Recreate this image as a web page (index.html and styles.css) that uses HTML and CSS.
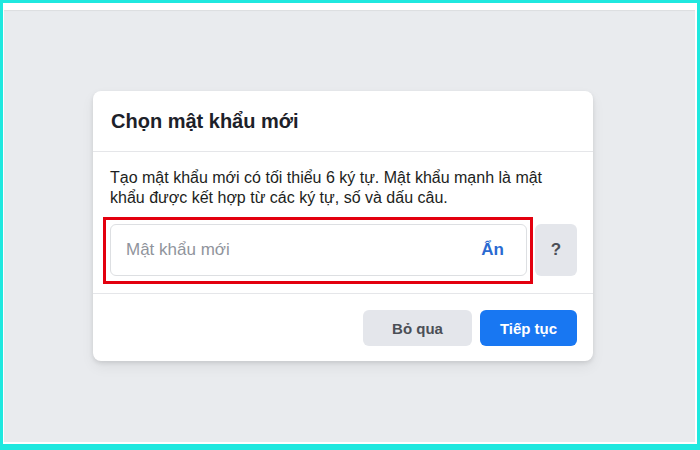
FILE: index.html
```html
<!DOCTYPE html>
<html lang="vi">
<head>
<meta charset="utf-8">
<title>Chọn mật khẩu mới</title>
<link rel="stylesheet" href="styles.css">
</head>
<body>
<div class="frame">
  <div class="stage">
    <div class="card">
      <div class="card-header">
        <h2 class="title">Chọn mật khẩu mới</h2>
      </div>
      <div class="card-body">
        <p class="desc">Tạo mật khẩu mới có tối thiểu 6 ký tự. Mật khẩu mạnh là mật khẩu được kết hợp từ các ký tự, số và dấu câu.</p>
        <div class="field-row">
          <div class="field">
            <span class="placeholder">Mật khẩu mới</span>
            <span class="toggle">Ẩn</span>
            <div class="highlight"></div>
          </div>
          <div class="help">?</div>
        </div>
      </div>
      <div class="card-footer">
        <div class="btn btn-gray">Bỏ qua</div>
        <div class="btn btn-blue">Tiếp tục</div>
      </div>
    </div>
  </div>
</div>
</body>
</html>
```
FILE: styles.css
```css
* { box-sizing: border-box; }
html, body { margin: 0; padding: 0; }
body {
  width: 700px;
  height: 450px;
  overflow: hidden;
  font-family: "Liberation Sans", Arial, sans-serif;
  color: #1c1e21;
}
.frame {
  width: 700px;
  height: 450px;
  border: 3px solid #1fe8df;
  border-bottom-width: 6px;
  background: #ffffff;
  padding: 7px 2px 2px 1px;
}
.stage {
  height: 100%;
  background: #e9ebee;
  box-shadow: inset 0 1px 1px rgba(0,0,0,0.06);
  padding: 81px 0 0 89px;
}
.card {
  width: 500px;
  background: #ffffff;
  border-radius: 8px;
  box-shadow: 0 2px 4px rgba(0,0,0,0.1), 0 6px 14px rgba(0,0,0,0.06);
}
.card-header {
  height: 61px;
  display: flex;
  align-items: center;
  padding: 0 17px 0 18px;
  border-bottom: 1px solid #e5e6e9;
}
.title {
  margin: 0;
  font-size: 20px;
  font-weight: bold;
  color: #1d2129;
}
.card-body {
  padding: 16px 16px 17px 17px;
  border-bottom: 1px solid #e5e6e9;
}
.desc {
  margin: 0 0 16px;
  font-size: 16px;
  line-height: 20px;
  color: #1c1e21;
}
.field-row {
  display: flex;
  gap: 8px;
  height: 52px;
}
.field {
  position: relative;
  flex: 1;
  border: 1px solid #dddfe2;
  border-radius: 6px;
  display: flex;
  align-items: center;
  justify-content: space-between;
  padding: 0 22px 0 15px;
}
.placeholder {
  font-size: 17px;
  color: #90949c;
}
.toggle {
  font-size: 17px;
  font-weight: bold;
  color: #2a6ad1;
}
.highlight {
  position: absolute;
  left: -8px;
  top: -8px;
  right: -7px;
  bottom: -9px;
  border: 3px solid #e3000f;
  pointer-events: none;
}
.help {
  width: 42px;
  background: #e4e6eb;
  border-radius: 6px;
  display: flex;
  align-items: center;
  justify-content: center;
  font-size: 17px;
  font-weight: bold;
  color: #4b4f56;
}
.card-footer {
  display: flex;
  justify-content: flex-end;
  gap: 8px;
  padding: 16px 16px 15px;
}
.btn {
  height: 36px;
  border-radius: 6px;
  display: flex;
  align-items: center;
  justify-content: center;
  font-size: 15px;
  font-weight: bold;
}
.btn-gray {
  width: 109px;
  background: #e4e6eb;
  color: #4b4f56;
}
.btn-blue {
  width: 97px;
  background: #1877f2;
  color: #ffffff;
}
```
